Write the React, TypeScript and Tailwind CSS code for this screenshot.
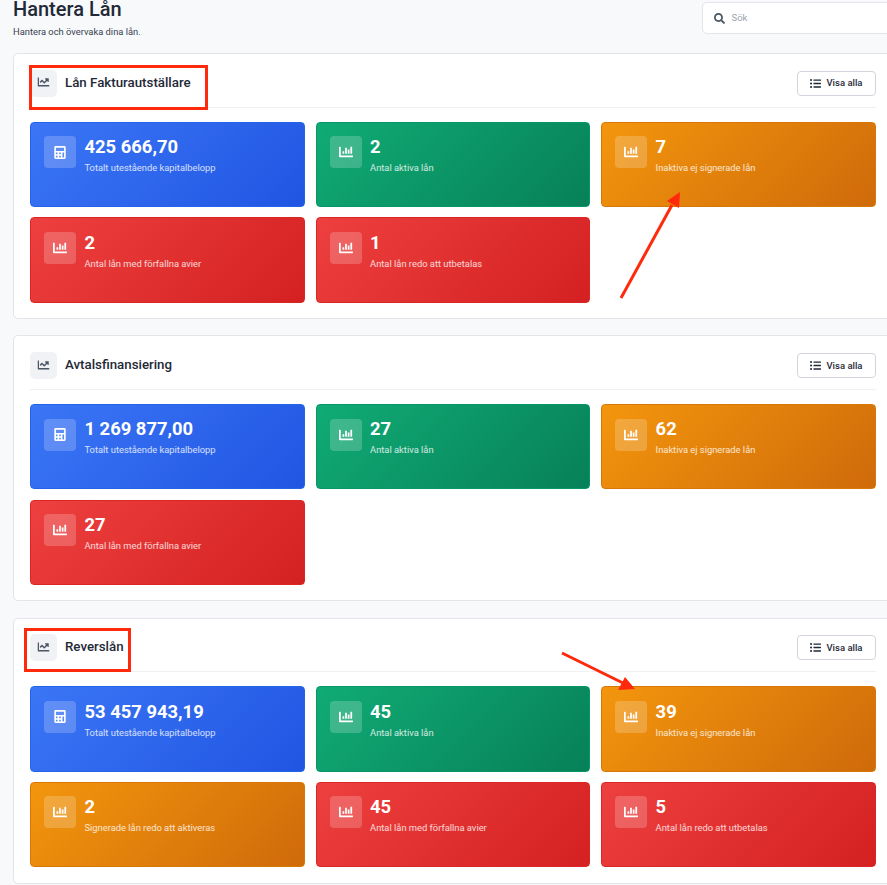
import { FaCalculator, FaChartBar, FaChartLine, FaListUl, FaSearch } from 'react-icons/fa';

type Tone = 'blue' | 'green' | 'orange' | 'red';

const toneClasses: Record<Tone, string> = {
  blue: 'from-[#3b76f6] to-[#2055e2] border-[#2563eb]',
  green: 'from-[#10ab75] to-[#078058] border-[#059669]',
  orange: 'from-[#f3960d] to-[#cf6a0a] border-[#d97706]',
  red: 'from-[#ee4040] to-[#d42020] border-[#dc2626]',
};

type Stat = { value: string; label: string; tone: Tone; calc?: boolean };

const sections: { title: string; stats: Stat[] }[] = [
  {
    title: 'Lån Fakturautställare',
    stats: [
      { value: '425 666,70', label: 'Totalt utestående kapitalbelopp', tone: 'blue', calc: true },
      { value: '2', label: 'Antal aktiva lån', tone: 'green' },
      { value: '7', label: 'Inaktiva ej signerade lån', tone: 'orange' },
      { value: '2', label: 'Antal lån med förfallna avier', tone: 'red' },
      { value: '1', label: 'Antal lån redo att utbetalas', tone: 'red' },
    ],
  },
  {
    title: 'Avtalsfinansiering',
    stats: [
      { value: '1 269 877,00', label: 'Totalt utestående kapitalbelopp', tone: 'blue', calc: true },
      { value: '27', label: 'Antal aktiva lån', tone: 'green' },
      { value: '62', label: 'Inaktiva ej signerade lån', tone: 'orange' },
      { value: '27', label: 'Antal lån med förfallna avier', tone: 'red' },
    ],
  },
  {
    title: 'Reverslån',
    stats: [
      { value: '53 457 943,19', label: 'Totalt utestående kapitalbelopp', tone: 'blue', calc: true },
      { value: '45', label: 'Antal aktiva lån', tone: 'green' },
      { value: '39', label: 'Inaktiva ej signerade lån', tone: 'orange' },
      { value: '2', label: 'Signerade lån redo att aktiveras', tone: 'orange' },
      { value: '45', label: 'Antal lån med förfallna avier', tone: 'red' },
      { value: '5', label: 'Antal lån redo att utbetalas', tone: 'red' },
    ],
  },
];

function StatTile({ stat }: { stat: Stat }) {
  return (
    <div className={`flex h-[85.2px] gap-[8.5px] rounded-[4px] border bg-linear-[135deg] px-[13px] py-[13.4px] ${toneClasses[stat.tone]}`}>
      <div className="flex h-8 w-8 shrink-0 items-center justify-center rounded-[4px] bg-white/20 text-white">
        {stat.calc ? <FaCalculator className="h-[13px] w-[12px]" /> : <FaChartBar className="h-[14px] w-[14px]" />}
      </div>
      <div className="pt-[0.8px]">
        <div className="text-[18.4px] leading-[20px] font-bold text-white">{stat.value}</div>
        <div className="mt-[5px] text-[9.35px] leading-[12px] text-white/80">{stat.label}</div>
      </div>
    </div>
  );
}

function Section({ title, stats }: { title: string; stats: Stat[] }) {
  return (
    <section className="w-[880px] rounded-l-[5px] border border-[#e3e5e9] bg-white px-4 pt-[15.8px] pb-[15.6px]">
      <div className="flex items-center justify-between border-b border-[#f0f1f3] pb-[10px]">
        <div className="flex items-center gap-2">
          <div className="flex h-[27px] w-[27px] items-center justify-center rounded-[5px] bg-[#f1f2f5] text-[#4b5563]">
            <FaChartLine className="h-[12px] w-[12px] -translate-x-[0.5px] -translate-y-[1px]" />
          </div>
          <h2 className="-translate-y-[0.7px] text-[13.3px] font-medium text-[#1f2937]">{title}</h2>
        </div>
        <button className="flex h-[25px] w-[79px] items-center justify-center gap-[5px] rounded-[4px] border border-[#d1d5db] bg-white text-[9.5px] font-medium text-[#1f2937]">
          <FaListUl className="h-[11px] w-[11px]" />
          Visa alla
        </button>
      </div>
      <div className="mt-[14px] grid grid-cols-3 gap-x-[10.67px] gap-y-[10.2px]">
        {stats.map((stat) => (
          <StatTile key={stat.label} stat={stat} />
        ))}
      </div>
    </section>
  );
}

export default function App() {
  return (
    <div className="relative h-[885px] overflow-hidden bg-[#f8f9fa] px-[13px] font-['Roboto',sans-serif]">
      <header className="flex h-[53.2px] justify-between">
        <div>
          <h1 className="text-[20px] leading-[18px] font-medium text-[#1f2937]">Hantera Lån</h1>
          <p className="mt-[8px] text-[9.35px] leading-[12px] text-[#374151]">Hantera och övervaka dina lån.</p>
        </div>
        <div className="absolute top-[2px] left-[702px] flex h-8 w-[200px] items-center gap-[7px] rounded-[5px] border border-[#e3e5e9] bg-white px-[10.5px]">
          <FaSearch className="h-[11px] w-[11px] text-[#4b5563]" />
          <span className="text-[9.5px] text-[#9ca3af]">Sök</span>
        </div>
      </header>
      <div className="flex flex-col gap-[16.3px]">
        {sections.map((s) => (
          <Section key={s.title} title={s.title} stats={s.stats} />
        ))}
      </div>

      {/* annotation overlays from the screenshot */}
      <div className="absolute top-[65px] left-[29px] h-[45px] w-[179px] border-[3px] border-[#ff2a0c]" />
      <div className="absolute top-[628px] left-[24px] h-[44px] w-[107px] border-[3px] border-[#ff2a0c]" />
      <svg className="absolute top-0 left-0" width="887" height="885" fill="none">
        <path d="M621 298L672 205" stroke="#ff2a0c" strokeWidth="3" />
        <path d="M680 192L667 201L679 208Z" fill="#ff2a0c" />
        <path d="M562 653L625 684" stroke="#ff2a0c" strokeWidth="3" />
        <path d="M635 689L625 677L618 690Z" fill="#ff2a0c" />
      </svg>
    </div>
  );
}
